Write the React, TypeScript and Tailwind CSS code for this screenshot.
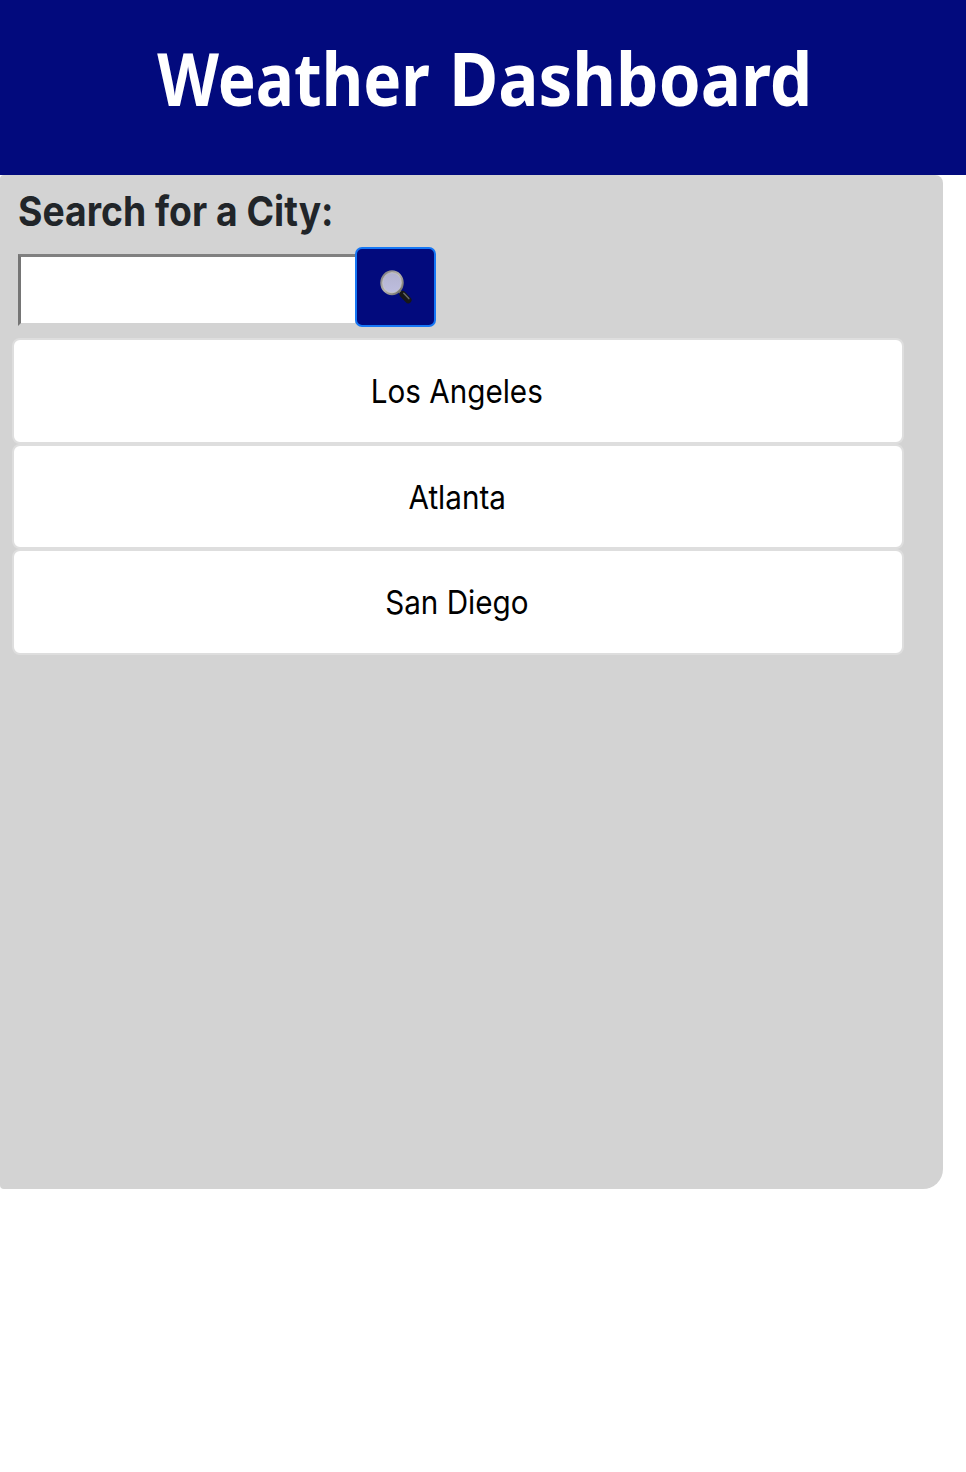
const cities = ["Los Angeles", "Atlanta", "San Diego"];

function MagnifierIcon() {
  return (
    <svg width="34" height="36" viewBox="0 0 34 36" aria-hidden="true">
      <defs>
        <linearGradient id="rim" x1="0" y1="0" x2="1" y2="1">
          <stop offset="0" stopColor="#77777c" />
          <stop offset="0.5" stopColor="#b5b2ae" />
          <stop offset="1" stopColor="#66665f" />
        </linearGradient>
        <linearGradient id="lens" x1="0" y1="0" x2="0" y2="1">
          <stop offset="0" stopColor="#b2b2cf" />
          <stop offset="1" stopColor="#bfbfe0" />
        </linearGradient>
      </defs>
      <path d="M19.5 21 L23.5 25.5" stroke="#777770" strokeWidth="3" />
      <path d="M23.7 25.2 L29.2 31" stroke="#171717" strokeWidth="6.6" strokeLinecap="round" />
      <path d="M24.8 24.2 L29.8 29.6" stroke="#666" strokeWidth="1.5" strokeLinecap="round" />
      <ellipse cx="13" cy="13.7" rx="10.5" ry="11.2" fill="url(#lens)" stroke="url(#rim)" strokeWidth="2.5" />
      <ellipse cx="13" cy="13.7" rx="9.4" ry="10.1" fill="none" stroke="#d0cece" strokeWidth="0.7" />
    </svg>
  );
}

export default function App() {
  return (
    <div className="min-h-[1472px] w-[966px] bg-white font-['Inter','Liberation_Sans',sans-serif]">
      <header className="flex h-[175px] justify-center bg-[#020a7d] pt-[28px] pr-[5px]">
        <h1 className="whitespace-nowrap font-['Noto_Sans',sans-serif] text-[73px] leading-[100px] font-bold text-white">
          <span className="inline-block origin-right scale-x-[0.874]">Weather</span>{" "}
          <span className="inline-block origin-left scale-x-[0.922]">Dashboard</span>
        </h1>
      </header>
      <main className="h-[1014px] w-[943px] rounded-tl-[4px] rounded-tr-[8px] rounded-br-[20px] rounded-bl-[4px] bg-[#d3d3d3] pl-[12px]">
        <form className="pl-[6px]">
          <h2 className="-ml-[0.5px] h-[72px] pt-[11px] text-[41px] leading-[50px] font-bold text-[#212529]">
            <span className="inline-block origin-left scale-x-[0.91] whitespace-nowrap">
              Search for a City:
            </span>
          </h2>
          <div className="flex h-[80px]">
            <input
              aria-label="City"
              className="mt-[7px] h-[72px] w-[337px] border-[3px] border-r-0 border-t-[#808080] border-b-[#d3d3d3] border-l-[#757575] bg-white px-2 text-[33px] outline-none"
            />
            <button
              type="button"
              aria-label="Search"
              className="flex h-[80px] w-[81px] items-center justify-center rounded-[7px] border-2 border-[#1677f5] bg-[#020a7d]"
            >
              <MagnifierIcon />
            </button>
          </div>
        </form>
        <ul className="mt-[11px] w-[892px]">
          {cities.map((city) => (
            <li
              key={city}
              className="flex h-[105.5px] items-center justify-center rounded-[8px] border-2 border-[#dedede] bg-white pt-[2px] pr-[2px] text-[33px] text-black"
            >
              <span className="inline-block scale-x-[0.898] whitespace-nowrap">{city}</span>
            </li>
          ))}
        </ul>
      </main>
    </div>
  );
}
